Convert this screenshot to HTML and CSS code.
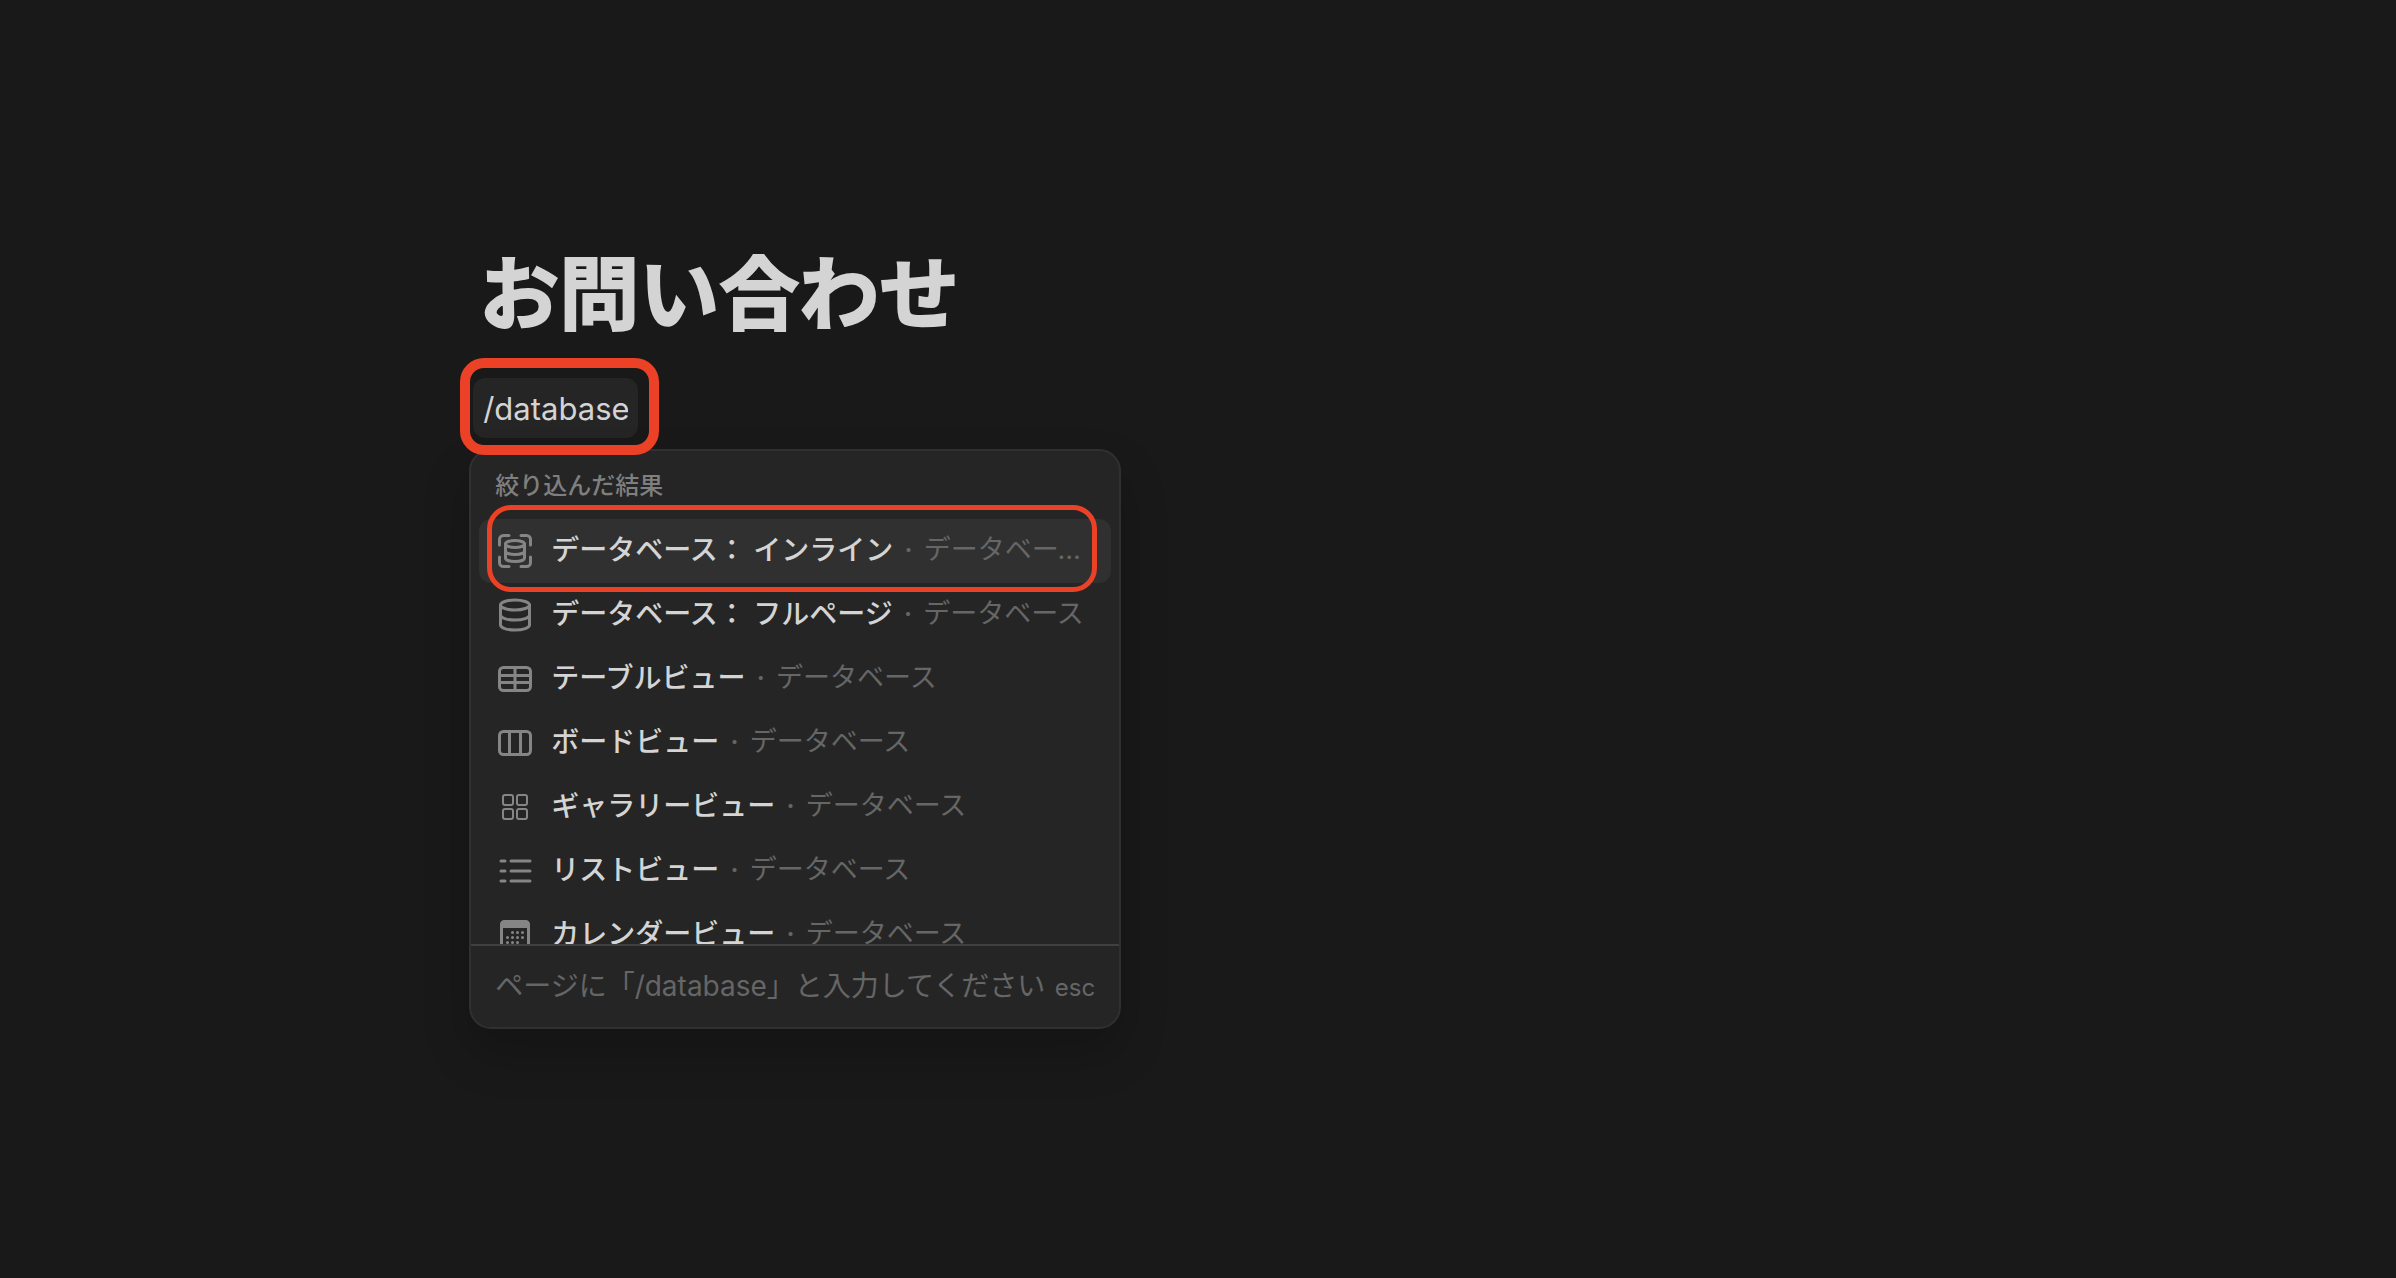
FILE: index.html
```
<!DOCTYPE html>
<html lang="ja">
<head>
  <meta charset="UTF-8">
  <meta name="viewport" content="width=device-width, initial-scale=1.0">
  <title>お問い合わせ</title>
  <link rel="stylesheet" href="styles.css">
</head>
<body>
  <main class="page">
    <h1 class="page-title">お問い合わせ</h1>

    <div class="command">
      <input class="command-input" type="text" value="/database" aria-label="コマンド">

      <div class="menu">
        <div class="menu-scroll">
          <h2 class="menu-heading">絞り込んだ結果</h2>

          <button class="item active" type="button">
            <svg class="icon" viewBox="0 0 40 40">
              <path d="M4.500 14V8.500a4 4 0 0 1 4-4H14M26 4.500h5.500a4 4 0 0 1 4 4V14M35.500 26v5.500a4 4 0 0 1-4 4H26M14 35.500H8.500a4 4 0 0 1-4-4V26"/>
              <ellipse cx="20" cy="13" rx="9.500" ry="3.500"/>
              <path d="M10.500 13v14c0 2 4 3.500 9.500 3.500s9.500-1.500 9.500-3.500V13M10.500 20c0 2 4 3.500 9.500 3.500s9.500-1.500 9.500-3.500"/>
            </svg>
            <span class="label">データベース： インライン<span class="dot">·</span></span>
            <span class="group">データベース</span>
          </button>

          <button class="item" type="button">
            <svg class="icon" viewBox="0 0 40 40">
              <ellipse cx="20" cy="10" rx="14.500" ry="5"/>
              <path d="M5.500 10v20c0 2.800 6.500 5 14.500 5s14.500-2.200 14.500-5V10M5.500 20c0 2.800 6.500 5 14.500 5s14.500-2.200 14.500-5"/>
            </svg>
            <span class="label">データベース： フルページ<span class="dot">·</span></span>
            <span class="group">データベース</span>
          </button>

          <button class="item" type="button">
            <svg class="icon" viewBox="0 0 40 40">
              <rect x="4.500" y="8.500" width="31" height="23" rx="4"/>
              <path d="M5 16.500h30M5 23.500h30M20 9v22"/>
            </svg>
            <span class="label">テーブルビュー<span class="dot">·</span></span>
            <span class="group">データベース</span>
          </button>

          <button class="item" type="button">
            <svg class="icon" viewBox="0 0 40 40">
              <rect x="4.500" y="8.500" width="31" height="23" rx="4"/>
              <path d="M14.500 9v22M25.500 9v22"/>
            </svg>
            <span class="label">ボードビュー<span class="dot">·</span></span>
            <span class="group">データベース</span>
          </button>

          <button class="item" type="button">
            <svg class="icon thin" viewBox="0 0 40 40">
              <rect x="8" y="8" width="10" height="10" rx="2"/>
              <rect x="22" y="8" width="10" height="10" rx="2"/>
              <rect x="8" y="22" width="10" height="10" rx="2"/>
              <rect x="22" y="22" width="10" height="10" rx="2"/>
            </svg>
            <span class="label">ギャラリービュー<span class="dot">·</span></span>
            <span class="group">データベース</span>
          </button>

          <button class="item" type="button">
            <svg class="icon" viewBox="0 0 40 40">
              <path d="M6 10h4M16 10h19M6 20h4M16 20h19M6 30h4M16 30h19"/>
            </svg>
            <span class="label">リストビュー<span class="dot">·</span></span>
            <span class="group">データベース</span>
          </button>

          <button class="item" type="button">
            <svg class="icon" viewBox="0 0 40 40">
              <rect x="6.500" y="6.500" width="27" height="27" rx="4"/>
              <path class="solid" d="M5 13V9.500A4.500 4.500 0 0 1 9.500 5h21A4.500 4.500 0 0 1 35 9.500V13z"/>
              <path class="days" d="M17.500 17.500h11M12.500 22.500h16M12.500 27.500h11"/>
            </svg>
            <span class="label">カレンダービュー<span class="dot">·</span></span>
            <span class="group">データベース</span>
          </button>
        </div>

        <div class="menu-footer">
          <span>ページに「/database」と入力してください</span>
          <kbd>esc</kbd>
        </div>

        <div class="mark mark-item"></div>
      </div>

      <div class="mark mark-input"></div>
    </div>
  </main>
</body>
</html>
```
FILE: styles.css
```
* {
  box-sizing: border-box;
}

body {
  margin: 0;
  min-height: 100vh;
  background: #191919;
  color: #d4d4d4;
  font-family: Inter, "Noto Sans CJK JP", sans-serif;
}

.page {
  padding: 246px 20% 0;
}

.page-title {
  margin: 0 0 36px;
  font-size: 80px;
  line-height: 96px;
  font-weight: 700;
  -webkit-text-stroke: 2px #d4d4d4;
}

.command {
  position: relative;
  margin-left: -6px;
}

.command-input {
  display: block;
  width: 165px;
  height: 60px;
  padding: 0 10px;
  border: 0;
  border-radius: 12px;
  background: #252525;
  color: inherit;
  font-family: inherit;
  font-size: 31px;
  outline: none;
}

.menu {
  position: absolute;
  top: 71px;
  left: -4px;
  width: 652px;
  border: 2px solid #303030;
  border-radius: 22px;
  background: #252525;
  box-shadow: 0 24px 48px rgba(0, 0, 0, 0.2);
}

.menu-scroll {
  height: 493px;
  padding: 20px 8px 0;
  overflow: hidden;
}

.menu-heading {
  margin: 0 0 18px;
  padding: 0 16px;
  color: #7f7f7f;
  font-size: 24px;
  line-height: 30px;
  font-weight: 500;
}

.item {
  display: flex;
  align-items: center;
  width: 100%;
  height: 64px;
  padding: 0 24px 2px 16px;
  border: 0;
  border-radius: 12px;
  background: none;
  color: inherit;
  font-family: inherit;
  font-size: 28px;
  line-height: 40px;
  font-weight: 500;
  text-align: left;
  white-space: nowrap;
}

.item.active {
  padding-right: 28px;
  background: #303030;
}

.label {
  flex: none;
}

.dot {
  margin: 0 11px;
  color: #666;
}

.group {
  min-width: 0;
  overflow: hidden;
  color: #666;
  font-size: 27px;
  font-weight: 400;
  text-overflow: ellipsis;
}

.icon {
  flex: none;
  width: 40px;
  height: 40px;
  margin: 2px 16px 0 0;
  fill: none;
  stroke: #858585;
  stroke-width: 3;
  stroke-linecap: round;
}

.icon.thin {
  stroke-width: 2;
}

.icon .solid {
  fill: #858585;
  stroke: none;
}

.icon .days {
  stroke-dasharray: 0 5;
}

.menu-footer {
  display: flex;
  align-items: baseline;
  justify-content: space-between;
  height: 83px;
  padding: 0 24px;
  border-top: 2px solid #404040;
  color: #666;
  font-size: 28px;
  line-height: 80px;
  white-space: nowrap;
}

.menu-footer kbd {
  font-family: inherit;
  font-size: 24px;
}

/* red highlight frames */
.mark {
  position: absolute;
  border: 5px solid #eb4126;
  border-radius: 24px;
  pointer-events: none;
}

.mark-item {
  top: 54px;
  left: 16px;
  width: 610px;
  height: 87px;
}

.mark-input {
  top: -20px;
  left: -13px;
  width: 199px;
  height: 97px;
  border-width: 10px;
}
```
